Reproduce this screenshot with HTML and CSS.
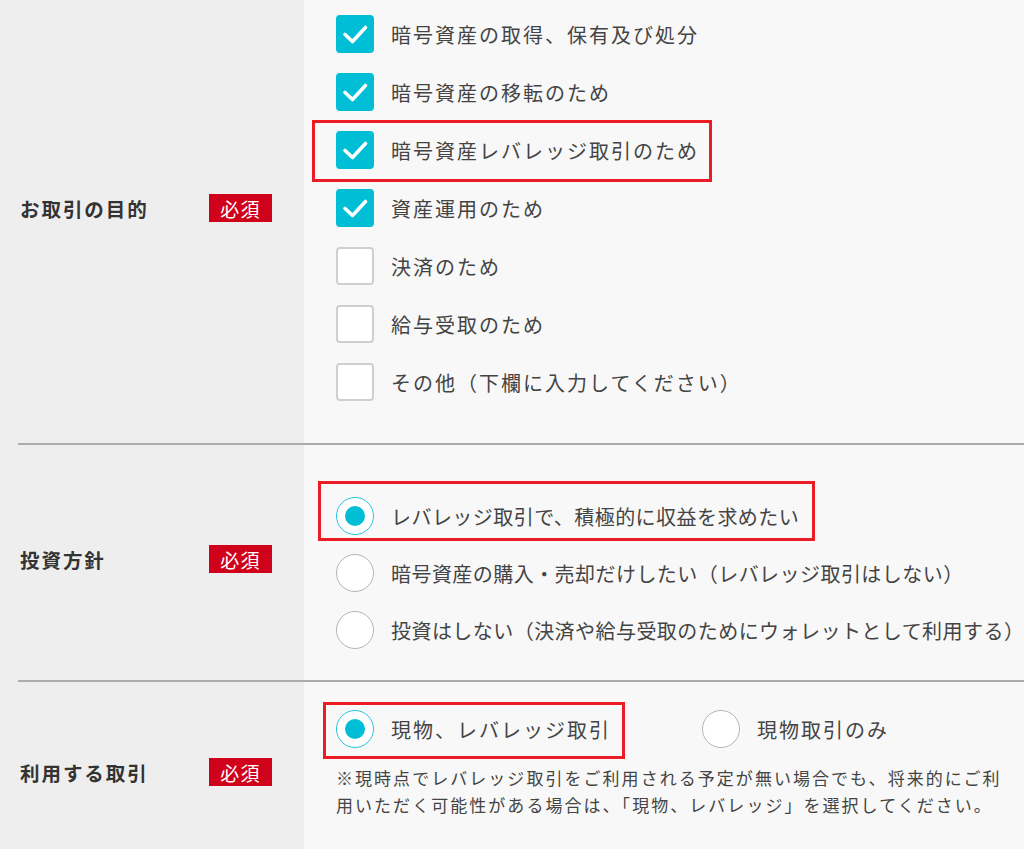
FILE: index.html
```html
<!DOCTYPE html>
<html lang="ja">
<head>
<meta charset="utf-8">
<link rel="stylesheet" href="styles.css">
</head>
<body>
<div class="page">
  <section class="field field--purpose">
    <div class="field-label"><span class="label-text">お取引の目的</span><span class="badge">必須</span></div>
    <div class="field-body">
      <ul class="options">
        <li class="option"><span class="check is-on"><svg viewBox="0 0 38 38"><path d="M9 19.5 L16.5 26.5 L29.5 12.5"/></svg></span><span class="option-text">暗号資産の取得、保有及び処分</span></li>
        <li class="option"><span class="check is-on"><svg viewBox="0 0 38 38"><path d="M9 19.5 L16.5 26.5 L29.5 12.5"/></svg></span><span class="option-text">暗号資産の移転のため</span></li>
        <li class="option option--marked"><span class="mark mark--a"></span><span class="check is-on"><svg viewBox="0 0 38 38"><path d="M9 19.5 L16.5 26.5 L29.5 12.5"/></svg></span><span class="option-text">暗号資産レバレッジ取引のため</span></li>
        <li class="option"><span class="check is-on"><svg viewBox="0 0 38 38"><path d="M9 19.5 L16.5 26.5 L29.5 12.5"/></svg></span><span class="option-text">資産運用のため</span></li>
        <li class="option"><span class="check"></span><span class="option-text">決済のため</span></li>
        <li class="option"><span class="check"></span><span class="option-text">給与受取のため</span></li>
        <li class="option"><span class="check"></span><span class="option-text">その他（下欄に入力してください）</span></li>
      </ul>
    </div>
  </section>

  <section class="field field--policy">
    <div class="field-label"><span class="label-text">投資方針</span><span class="badge">必須</span></div>
    <div class="field-body">
      <ul class="options">
        <li class="option option--marked"><span class="mark mark--b"></span><span class="radio is-on"></span><span class="option-text">レバレッジ取引で、積極的に収益を求めたい</span></li>
        <li class="option"><span class="radio"></span><span class="option-text">暗号資産の購入・売却だけしたい（レバレッジ取引はしない）</span></li>
        <li class="option"><span class="radio"></span><span class="option-text">投資はしない（決済や給与受取のためにウォレットとして利用する）</span></li>
      </ul>
    </div>
  </section>

  <section class="field field--usage">
    <div class="field-label"><span class="label-text">利用する取引</span><span class="badge">必須</span></div>
    <div class="field-body">
      <div class="inline-options">
        <div class="option option--marked"><span class="mark mark--c"></span><span class="radio is-on"></span><span class="option-text">現物、レバレッジ取引</span></div>
        <div class="option"><span class="radio"></span><span class="option-text">現物取引のみ</span></div>
      </div>
      <p class="note">※現時点でレバレッジ取引をご利用される予定が無い場合でも、将来的にご利用いただく可能性がある場合は、「現物、レバレッジ」を選択してください。</p>
    </div>
  </section>
</div>
</body>
</html>
```

FILE: styles.css
```css
* { box-sizing: border-box; }
html, body { margin: 0; padding: 0; }
body {
  width: 1024px;
  height: 849px;
  overflow: hidden;
  background: linear-gradient(to right, #eeeeee 0, #eeeeee 304px, #f8f8f8 304px, #f8f8f8 100%);
  font-family: "Noto Sans CJK JP", "Noto Sans", sans-serif;
  color: #444;
}
.page { padding-left: 18px; }
.field {
  display: grid;
  grid-template-columns: 286px 1fr;
  border-bottom: 2px solid #acacac;
}
.field--purpose { padding: 15px 0 42px; }
.field--policy { padding: 52px 0 31px; }
.field--usage { padding: 28px 0 40px; border-bottom: none; }

.field-label {
  display: flex;
  align-items: center;
  padding-left: 2px;
}
.field--policy .field-label { padding-bottom: 28px; }
.field--usage .field-label { padding-top: 16px; }
.label-text {
  width: 189px;
  font-size: 19.5px;
  font-weight: 700;
  letter-spacing: 0.1em;
  color: #333;
}
.badge {
  display: inline-flex;
  align-items: center;
  justify-content: center;
  width: 63px;
  height: 28px;
  background: #d0021b;
  color: #fff;
  font-size: 19px;
  letter-spacing: 0.06em;
}

.field-body { padding-left: 32px; }
.options {
  list-style: none;
  margin: 0;
  padding: 0;
  display: flex;
  flex-direction: column;
  gap: 20px;
}
.field--policy .options { gap: 19px; }
.option {
  position: relative;
  display: flex;
  align-items: center;
  height: 38px;
}
.option-text {
  margin-left: 17px;
  font-size: 20px;
  letter-spacing: 0.1em;
  white-space: nowrap;
  color: #444;
}
.field--policy .option-text { letter-spacing: 0.45px; }
.check {
  flex: none;
  width: 38px;
  height: 38px;
  border-radius: 4px;
  background: #fff;
  border: 2px solid #cfcfcf;
  display: flex;
}
.check.is-on {
  background: #00bed6;
  border-color: #00bed6;
}
.check svg {
  width: 38px;
  height: 38px;
  margin: -2px;
}
.check svg path {
  fill: none;
  stroke: #fff;
  stroke-width: 3.6;
  stroke-linecap: round;
  stroke-linejoin: round;
}
.radio {
  flex: none;
  position: relative;
  width: 38px;
  height: 38px;
  border-radius: 50%;
  background: #fff;
  border: 1px solid #b5b5b5;
}
.radio.is-on { border-color: #27c6dc; }
.radio.is-on::after {
  content: "";
  position: absolute;
  left: 8px;
  top: 8px;
  width: 20px;
  height: 20px;
  border-radius: 50%;
  background: #00bed6;
}

.mark {
  position: absolute;
  border: 3px solid #ec1c24;
  pointer-events: none;
}
.mark--a { left: -24px; top: -11px; width: 400px; height: 62px; }
.mark--b { left: -18px; top: -16px; width: 497px; height: 60px; }
.mark--c { left: -13px; top: -8px; width: 302px; height: 57px; }

.inline-options {
  display: flex;
  gap: 0;
}
.inline-options .option:first-child { width: 366px; }
.note {
  margin: 16px 0 0;
  padding-right: 10px;
  font-size: 17px;
  line-height: 27px;
  letter-spacing: 0.12em;
  color: #444;
}
```
